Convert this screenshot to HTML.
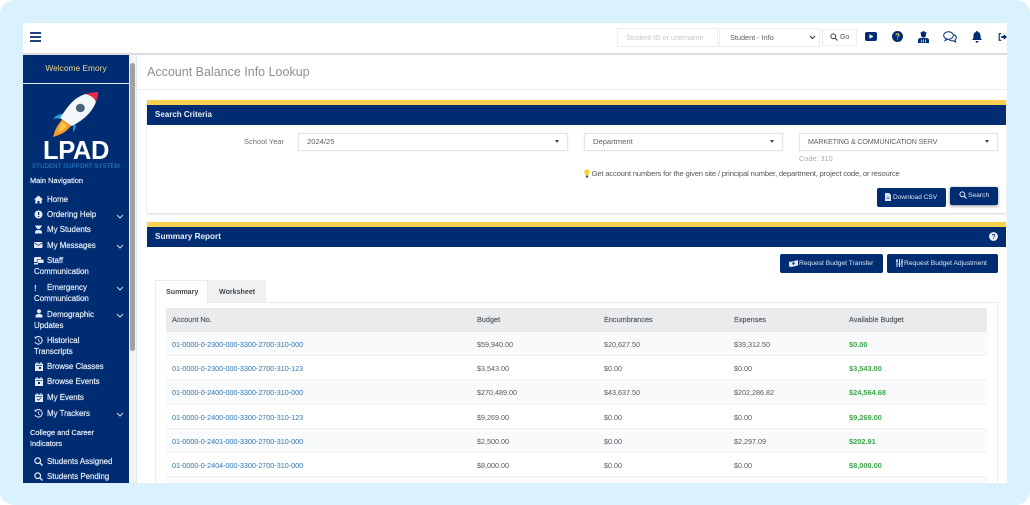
<!DOCTYPE html>
<html><head><meta charset="utf-8">
<style>
*{box-sizing:border-box}
html,body{margin:0;padding:0;width:1030px;height:505px;overflow:hidden;background:#fff}
body{font-family:"Liberation Sans",sans-serif;position:relative}
#bg{position:absolute;left:0;top:0;width:1030px;height:505px;background:#daf1fe;border-radius:14px}
#app{position:absolute;left:23px;top:23px;width:984px;height:460px;background:#fff;overflow:hidden}
.a{position:absolute;white-space:nowrap}
.t{position:absolute;white-space:nowrap;line-height:12px;height:12px}
svg{position:absolute;display:block}
.nav{color:#e3ebf7;font-size:7.9px;-webkit-text-stroke:.2px #e3ebf7}
.sel{position:absolute;background:#fff;border:1px solid #e4e6e8;box-shadow:0 0 1px #ddd;height:18px;color:#5d6166;font-size:7.6px;line-height:16px;padding-left:8px;white-space:nowrap}
.sel:after{content:"";position:absolute;right:8px;top:6px;border-left:2.5px solid transparent;border-right:2.5px solid transparent;border-top:3px solid #444}
.btn{position:absolute;background:#002d72;color:#dfe7f3;font-size:6.7px;border-radius:2px;line-height:19px;white-space:nowrap;font-weight:400}
.h{color:#5b6065;font-size:7.3px;-webkit-text-stroke:.2px #5b6065}
.c{color:#55595e;font-size:7.2px}
.l{color:#2f74b0;font-size:7.2px}
.g{color:#3fa64b;font-size:7.4px;font-weight:700}
</style></head>
<body>
<div id="bg"></div>
<div id="app">
<!-- header -->
<div class="a" style="left:0;top:0;width:984px;height:32px;background:#fff;border-bottom:2px solid #dcdcdc"></div>
<div class="a" style="left:7px;top:9px;width:11px;height:2px;background:#23427c"></div>
<div class="a" style="left:7px;top:13px;width:11px;height:2px;background:#23427c"></div>
<div class="a" style="left:7px;top:17px;width:11px;height:2px;background:#23427c"></div>

<div class="a" style="left:594px;top:5px;width:101px;height:19px;border:1px solid #eceded;color:#c3c6c9;font-size:7.3px;line-height:17px;padding-left:8px">Student ID or username</div>
<div class="a" style="left:696px;top:5px;width:101px;height:19px;border:1px solid #eceded;color:#5a5e63;font-size:7.3px;line-height:17px;padding-left:10px">Student - Info
<svg style="left:89px;top:6px" width="7" height="5" viewBox="0 0 7 5"><path d="M1 1l2.5 2.5L6 1" fill="none" stroke="#444" stroke-width="1.2"/></svg></div>
<div class="a" style="left:799px;top:6px;width:35px;height:17px;border:1px solid #eceded;color:#555;font-size:7px;line-height:16px;padding-left:17px">Go
<svg style="left:7px;top:3px" width="8" height="8" viewBox="0 0 8 8"><circle cx="3.3" cy="3.3" r="2.4" fill="none" stroke="#444" stroke-width="1"/><path d="M5 5l2.5 2.5" stroke="#444" stroke-width="1.1"/></svg></div>

<svg style="left:842px;top:9px" width="12" height="9" viewBox="0 0 12 9"><rect width="12" height="9" rx="2" fill="#002d72"/><path d="M4.5 2.2v4.6L8.5 4.5z" fill="#fff"/></svg>
<svg style="left:869px;top:8px" width="11" height="11" viewBox="0 0 11 11"><circle cx="5.5" cy="5.5" r="5.5" fill="#002d72"/><path d="M4 4.2c0-2 3-2 3 0 0 1-1.500 1-1.500 2.200" fill="none" stroke="#f4d35e" stroke-width="1"/><rect x="5" y="7.500" width="1" height="1" fill="#f4d35e"/></svg>
<svg style="left:895px;top:8px" width="11" height="12" viewBox="0 0 11 12"><path d="M5.500 0l3.500 2-1 .5V4c0 1.500-1 2.500-2.500 2.500S3 5.500 3 4V2.500L2 2z" fill="#002d72"/><path d="M0 12V9c0-1.500 1.500-2 3-2h5c1.500 0 3 .5 3 2v3z" fill="#002d72"/><path d="M3.500 8.500v3M5.500 8.500v3M7.500 8.500v3" stroke="#fff" stroke-width=".7"/></svg>
<svg style="left:920px;top:8px" width="14" height="12" viewBox="0 0 14 12"><ellipse cx="5.500" cy="4.500" rx="4.800" ry="3.700" fill="none" stroke="#002d72" stroke-width="1"/><path d="M3 8L1.800 9.800 5 8.200" fill="none" stroke="#002d72" stroke-width=".8"/><path d="M10.800 3.600c1.500.6 2.500 1.700 2.500 3 0 1-.5 1.800-1.300 2.400l.7 2-2.500-1.300c-1.500.3-3-.1-4-1" fill="none" stroke="#002d72" stroke-width="1"/></svg>
<svg style="left:949px;top:8px" width="10" height="12" viewBox="0 0 10 12"><path d="M5 0c.6 0 1 .4 1 1 1.800.5 2.500 2 2.500 3.500 0 2.500.5 3.500 1.500 4.500H0c1-1 1.500-2 1.500-4.500C1.500 3 2.200 1.500 4 1c0-.6.4-1 1-1z" fill="#002d72"/><path d="M3.500 10h3c0 1-.7 1.800-1.500 1.800S3.500 11 3.500 10z" fill="#002d72"/></svg>
<svg style="left:975px;top:9px" width="9" height="10" viewBox="0 0 11 10"><path d="M4 1H1.500v8H4" fill="none" stroke="#002d72" stroke-width="1.400"/><path d="M4 3.800h3V1.500L11 5 7 8.500V6.200H4z" fill="#002d72"/></svg>

<!-- sidebar -->
<div class="a" style="left:0;top:32px;width:106px;height:428px;background:#002d72"></div>
<div class="a" style="left:0;top:60px;width:106px;height:1px;background:#dfe6f0"></div>
<div class="t" style="left:0;top:39px;width:106px;text-align:center;color:#ecd489;font-size:8.400px">Welcome Emory</div>
<div class="a" style="left:106px;top:32px;width:7px;height:428px;background:#f3f3f3"></div>
<div class="a" style="left:107px;top:40px;width:5px;height:288px;background:#a2a2a2;border-radius:3px"></div>
<div class="a" style="left:113px;top:32px;width:1px;height:428px;background:#e6e6e6"></div>

<svg style="left:21px;top:69px" width="60" height="48" viewBox="0 0 52 48" preserveAspectRatio="none">
<path d="M8 27C10 23 17 20 22 22L17 28C14 26 11 26 8 27z" fill="#2a9fd8"/>
<path d="M27 32C30 31 32 27 30 24L24 29C25 31 26 33 25 40 27 38 28 35 27 32z" fill="#2a9fd8"/>
<path d="M17 26L14 30C12 33 9 38 8 45 13 43 18 41 21 37L24 33z" fill="#f29a2e"/>
<path d="M16 30C14 33 13 37 12 40 15 39 18 37 20 34z" fill="#f7c948"/>
<path d="M36 2C27 5 21 13 14 26L24 34C36 27 42 19 45 10 44 6 40 3 36 2z" fill="#f4f7fa"/>
<path d="M36 2C39 1 45 0 47 0 47 3 46 8 45 10 44 6 40 3 36 2z" fill="#ea2a4a"/>
<ellipse cx="31.500" cy="16" rx="3.900" ry="4.200" fill="#4d6478"/>
</svg>
<div class="t" style="left:0;top:113px;width:106px;height:30px;line-height:30px;text-align:center;color:#fff;font-size:25.500px;font-weight:700;letter-spacing:-.4px">LPAD</div>
<div class="t" style="left:0;top:138px;width:106px;text-align:center;color:#2a8ad2;font-size:6px;letter-spacing:.12px">STUDENT SUPPORT SYSTEM</div>
<div class="t nav" style="left:7px;top:152px;font-size:7.400px">Main Navigation</div>

<div class="t nav" style="left:24px;top:171px">Home</div>
<div class="t nav" style="left:24px;top:186px">Ordering Help</div>
<div class="t nav" style="left:24px;top:201px">My Students</div>
<div class="t nav" style="left:24px;top:217px">My Messages</div>
<div class="t nav" style="left:24px;top:232px">Staff</div>
<div class="t nav" style="left:11px;top:243px">Communication</div>
<div class="t nav" style="left:24px;top:258.500px">Emergency</div>
<div class="t nav" style="left:11px;top:269.500px">Communication</div>
<div class="t nav" style="left:24px;top:285.500px">Demographic</div>
<div class="t nav" style="left:11px;top:296.500px">Updates</div>
<div class="t nav" style="left:24px;top:312px">Historical</div>
<div class="t nav" style="left:11px;top:322.500px">Transcripts</div>
<div class="t nav" style="left:24px;top:338px">Browse Classes</div>
<div class="t nav" style="left:24px;top:353px">Browse Events</div>
<div class="t nav" style="left:24px;top:368.500px">My Events</div>
<div class="t nav" style="left:24px;top:384.500px">My Trackers</div>
<div class="t nav" style="left:7px;top:404px;font-size:7.400px">College and Career</div>
<div class="t nav" style="left:7px;top:414.500px;font-size:7.400px">Indicators</div>
<div class="t nav" style="left:24px;top:433px">Students Assigned</div>
<div class="t nav" style="left:24px;top:448px">Students Pending</div>

<!-- sidebar icons -->
<svg style="left:11px;top:172px" width="9" height="9" viewBox="0 0 9 9"><path d="M4.500.5L0 4.500h1.300V8.500h2.200V6h2v2.500h2.200V4.500H9z" fill="#e3ebf7"/></svg>
<svg style="left:11px;top:187px" width="9" height="9" viewBox="0 0 9 9"><circle cx="4.500" cy="4.500" r="4" fill="#e3ebf7"/><rect x="4" y="2" width="1.200" height="3" fill="#002d72"/><rect x="4" y="6" width="1.200" height="1" fill="#002d72"/></svg>
<svg style="left:11px;top:202px" width="9" height="9" viewBox="0 0 9 9"><path d="M1 .5h7v1H7c0 1.500-1 2-1.500 2.500h-2C3 3.500 2 3 2 1.500H1zM1 8.500V7c0-1 1-1.800 2.500-2h2C7 5.200 8 6 8 7v1.500z" fill="#e3ebf7"/></svg>
<svg style="left:11px;top:218px" width="9" height="8" viewBox="0 0 9 8"><rect y="1" width="8.500" height="6" rx=".7" fill="#e3ebf7"/><path d="M.3 1.800l4 2.700 4-2.700" fill="none" stroke="#002d72" stroke-width=".7"/></svg>
<svg style="left:11px;top:233px" width="10" height="9" viewBox="0 0 10 9"><path d="M1 1h6v2H3v3H0V2z" fill="#e3ebf7"/><rect x="3.500" y="3.500" width="6" height="3.500" fill="#e3ebf7"/><rect x="0" y="7" width="4" height="1.500" fill="#e3ebf7"/></svg>
<div class="t" style="left:11px;top:258.500px;color:#e3ebf7;font-size:8.500px;font-weight:700">!</div>
<svg style="left:12px;top:286px" width="8" height="9" viewBox="0 0 8 9"><circle cx="4" cy="2.300" r="2.100" fill="#e3ebf7"/><path d="M.5 8.500V7.200C.5 5.700 2 5 4 5s3.500.7 3.500 2.200v1.300z" fill="#e3ebf7"/></svg>
<svg style="left:11px;top:313px" width="9" height="9" viewBox="0 0 9 9"><path d="M1.200 2.200A3.800 3.800 0 1 1 1 6" fill="none" stroke="#e3ebf7" stroke-width="1"/><path d="M0 .7l2.600.4-.6 2.300z" fill="#e3ebf7"/><path d="M4.500 2.500v2.200l1.500 1" fill="none" stroke="#e3ebf7" stroke-width=".8"/></svg>
<svg style="left:12px;top:339px" width="8" height="9" viewBox="0 0 8 9"><path d="M0 1.500h8V9H0z" fill="#e3ebf7"/><path d="M2 0v2M6 0v2" stroke="#e3ebf7" stroke-width="1"/><rect x="1" y="3" width="6" height=".7" fill="#002d72"/><rect x="4" y="5" width="2" height="2" fill="#002d72"/></svg>
<svg style="left:12px;top:354px" width="8" height="9" viewBox="0 0 8 9"><path d="M0 1.500h8V9H0z" fill="#e3ebf7"/><path d="M2 0v2M6 0v2" stroke="#e3ebf7" stroke-width="1"/><rect x="1" y="3" width="6" height=".7" fill="#002d72"/><rect x="3" y="5" width="2" height="2" fill="#002d72"/></svg>
<svg style="left:12px;top:369.500px" width="8" height="9" viewBox="0 0 8 9"><path d="M0 1.500h8V9H0z" fill="#e3ebf7"/><path d="M2 0v2M6 0v2" stroke="#e3ebf7" stroke-width="1"/><rect x="1" y="3" width="6" height=".7" fill="#002d72"/><path d="M2 6l1.300 1.200L6 4.800" fill="none" stroke="#002d72" stroke-width=".8"/></svg>
<svg style="left:11px;top:385.500px" width="9" height="9" viewBox="0 0 9 9"><path d="M1.200 2.200A3.800 3.800 0 1 1 1 6" fill="none" stroke="#e3ebf7" stroke-width="1"/><path d="M0 .7l2.600.4-.6 2.300z" fill="#e3ebf7"/><path d="M4.500 2.500v2.200l1.500 1" fill="none" stroke="#e3ebf7" stroke-width=".8"/></svg>
<svg style="left:11px;top:434px" width="9" height="9" viewBox="0 0 9 9"><circle cx="3.700" cy="3.700" r="2.800" fill="none" stroke="#e3ebf7" stroke-width="1.200"/><path d="M5.800 5.800l2.700 2.700" stroke="#e3ebf7" stroke-width="1.400"/></svg>
<svg style="left:11px;top:449px" width="9" height="9" viewBox="0 0 9 9"><circle cx="3.700" cy="3.700" r="2.800" fill="none" stroke="#e3ebf7" stroke-width="1.200"/><path d="M5.800 5.800l2.700 2.700" stroke="#e3ebf7" stroke-width="1.400"/></svg>
<!-- chevrons -->
<svg style="left:93px;top:190.500px" width="8" height="6" viewBox="0 0 8 6"><path d="M1 1l3 3 3-3" fill="none" stroke="#cfdaec" stroke-width="1"/></svg>
<svg style="left:93px;top:221px" width="8" height="6" viewBox="0 0 8 6"><path d="M1 1l3 3 3-3" fill="none" stroke="#cfdaec" stroke-width="1"/></svg>
<svg style="left:93px;top:262.500px" width="8" height="6" viewBox="0 0 8 6"><path d="M1 1l3 3 3-3" fill="none" stroke="#cfdaec" stroke-width="1"/></svg>
<svg style="left:93px;top:289.500px" width="8" height="6" viewBox="0 0 8 6"><path d="M1 1l3 3 3-3" fill="none" stroke="#cfdaec" stroke-width="1"/></svg>
<svg style="left:93px;top:388.500px" width="8" height="6" viewBox="0 0 8 6"><path d="M1 1l3 3 3-3" fill="none" stroke="#cfdaec" stroke-width="1"/></svg>

<!-- title -->
<div class="t" style="left:124px;top:41px;height:16px;line-height:16px;color:#8d9094;font-size:12.500px">Account Balance Info Lookup</div>
<div class="a" style="left:114px;top:66px;width:870px;height:1px;background:#ececec"></div>

<!-- search card -->
<div class="a" style="left:124px;top:77px;width:859px;height:113px;background:#fff;box-shadow:0 1px 2px #d4d4d4"></div>
<div class="a" style="left:124px;top:77px;width:859px;height:5px;background:#f9d14f"></div>
<div class="a" style="left:124px;top:82px;width:859px;height:20px;background:#002d72"></div>
<div class="t" style="left:132px;top:86px;color:#e8eef7;font-size:8px;font-weight:700">Search Criteria</div>
<div class="t" style="left:221px;top:113px;color:#6a6e73;font-size:7.500px">School Year</div>
<div class="sel" style="left:275px;top:110px;width:270px">2024/25</div>
<div class="sel" style="left:561px;top:110px;width:199px">Department</div>
<div class="sel" style="left:776px;top:110px;width:199px;font-size:7.100px;letter-spacing:-.12px">MARKETING &amp; COMMUNICATION SERV</div>
<div class="t" style="left:776px;top:130px;color:#a9adb1;font-size:7.300px">Code: 310</div>
<svg style="left:561px;top:146px" width="6" height="9" viewBox="0 0 6 9"><path d="M3 .5C1.300.5.300 1.700.300 3c0 1.300 1 1.800 1.200 3h3c.2-1.200 1.200-1.700 1.200-3C5.700 1.700 4.700.5 3 .5z" fill="#f7d52c"/><rect x="1.800" y="6.500" width="2.400" height="2" fill="#444"/></svg>
<div class="t" style="left:568.500px;top:145px;color:#55595e;font-size:7.700px;letter-spacing:-.2px">Get account numbers for the given site / principal number, department, project code, or resource</div>
<div class="btn" style="left:854px;top:165px;width:69px;padding-left:16px;font-size:6.500px">Download CSV
<svg style="left:8px;top:5px" width="6" height="8" viewBox="0 0 6 8"><path d="M0 0h4l2 2v6H0z" fill="#dfe7f3"/><path d="M1.500 4h3M1.500 5.500h3" stroke="#002d72" stroke-width=".6"/></svg></div>
<div class="btn" style="left:927px;top:164px;width:48px;height:18px;padding-left:18px;line-height:18px;box-shadow:0 1px 3px #888">Search
<svg style="left:9px;top:4px" width="8" height="8" viewBox="0 0 8 8"><circle cx="3.300" cy="3.300" r="2.400" fill="none" stroke="#dfe7f3" stroke-width="1"/><path d="M5 5l2.500 2.500" stroke="#dfe7f3" stroke-width="1.200"/></svg></div>

<!-- summary -->
<div class="a" style="left:124px;top:199px;width:859px;height:5px;background:#f9d14f"></div>
<div class="a" style="left:124px;top:204px;width:859px;height:20px;background:#002d72"></div>
<div class="t" style="left:132px;top:208px;color:#e8eef7;font-size:8.200px;font-weight:700">Summary Report</div>
<svg style="left:966px;top:209px" width="9" height="9" viewBox="0 0 9 9"><circle cx="4.500" cy="4.500" r="4.400" fill="#f0f3f7"/><path d="M3.200 3.500c0-1.600 2.700-1.600 2.700 0 0 .9-1.300.9-1.300 1.900" fill="none" stroke="#002d72" stroke-width=".8"/><rect x="4.200" y="6" width=".9" height=".9" fill="#002d72"/></svg>
<div class="btn" style="left:757px;top:231px;width:103px;padding-left:19px">Request Budget Transfer
<svg style="left:9px;top:6px" width="9" height="7" viewBox="0 0 9 7"><path d="M0 1.500C3 2.500 6 .5 9 0v5.500C6 6 3 7.500 0 6.500z" fill="#dfe7f3"/><circle cx="4.500" cy="3.500" r="1.200" fill="#002d72"/></svg></div>
<div class="btn" style="left:864px;top:231px;width:111px;padding-left:17px">Request Budget Adjustment
<svg style="left:9px;top:5px" width="7" height="8" viewBox="0 0 7 8"><path d="M1 0v8M3.500 0v8M6 0v8" stroke="#dfe7f3" stroke-width="1"/><path d="M0 2h2M2.500 5h2M5 3h2" stroke="#dfe7f3" stroke-width="1.300"/></svg></div>

<!-- tabs -->
<div class="a" style="left:132px;top:279px;width:843px;height:190px;border:1px solid #e9ebec"></div>
<div class="a" style="left:132px;top:257px;width:53px;height:23px;background:#fff;border:1px solid #e9ebec;border-bottom:none"></div>
<div class="a" style="left:185px;top:257px;width:58px;height:22px;background:#eff1f2"></div>
<div class="t" style="left:143px;top:263px;color:#44484c;font-size:7.100px;font-weight:700">Summary</div>
<div class="t" style="left:196px;top:263px;color:#44484c;font-size:7.100px;font-weight:700">Worksheet</div>

<!-- table -->
<div class="a" style="left:143px;top:285px;width:821px;height:24px;background:#e9ebed"></div>
<div class="t h" style="left:149px;top:291px">Account No.</div>
<div class="t h" style="left:454px;top:291px">Budget</div>
<div class="t h" style="left:581px;top:291px">Encumbrances</div>
<div class="t h" style="left:711px;top:291px">Expenses</div>
<div class="t h" style="left:826px;top:291px">Available Budget</div>

<div class="a" style="left:143px;top:309px;width:821px;height:24px;background:#f9fafb;border-bottom:1px solid #f0f1f2"></div>
<div class="a" style="left:143px;top:333px;width:821px;height:24px;background:#fff;border-bottom:1px solid #f0f1f2"></div>
<div class="a" style="left:143px;top:357px;width:821px;height:25px;background:#f9fafb;border-bottom:1px solid #f0f1f2"></div>
<div class="a" style="left:143px;top:382px;width:821px;height:24px;background:#fff;border-bottom:1px solid #f0f1f2"></div>
<div class="a" style="left:143px;top:406px;width:821px;height:24px;background:#f9fafb;border-bottom:1px solid #f0f1f2"></div>
<div class="a" style="left:143px;top:430px;width:821px;height:24px;background:#fff;border-bottom:1px solid #f0f1f2"></div>
<div class="a" style="left:143px;top:454px;width:821px;height:6px;background:#f9fafb"></div>

<div class="t l" style="left:149px;top:315.500px">01-0000-0-2300-000-3300-2700-310-000</div>
<div class="t c" style="left:454px;top:315.500px">$59,940.00</div>
<div class="t c" style="left:581px;top:315.500px">$20,627.50</div>
<div class="t c" style="left:711px;top:315.500px">$39,312.50</div>
<div class="t g" style="left:826px;top:315.500px">$0.00</div>

<div class="t l" style="left:149px;top:340px">01-0000-0-2300-000-3300-2700-310-123</div>
<div class="t c" style="left:454px;top:340px">$3,543.00</div>
<div class="t c" style="left:581px;top:340px">$0.00</div>
<div class="t c" style="left:711px;top:340px">$0.00</div>
<div class="t g" style="left:826px;top:340px">$3,543.00</div>

<div class="t l" style="left:149px;top:364px">01-0000-0-2400-000-3300-2700-310-000</div>
<div class="t c" style="left:454px;top:364px">$270,489.00</div>
<div class="t c" style="left:581px;top:364px">$43,637.50</div>
<div class="t c" style="left:711px;top:364px">$202,286.82</div>
<div class="t g" style="left:826px;top:364px">$24,564.68</div>

<div class="t l" style="left:149px;top:388.500px">01-0000-0-2400-000-3300-2700-310-123</div>
<div class="t c" style="left:454px;top:388.500px">$9,269.00</div>
<div class="t c" style="left:581px;top:388.500px">$0.00</div>
<div class="t c" style="left:711px;top:388.500px">$0.00</div>
<div class="t g" style="left:826px;top:388.500px">$9,269.00</div>

<div class="t l" style="left:149px;top:412.500px">01-0000-0-2401-000-3300-2700-310-000</div>
<div class="t c" style="left:454px;top:412.500px">$2,500.00</div>
<div class="t c" style="left:581px;top:412.500px">$0.00</div>
<div class="t c" style="left:711px;top:412.500px">$2,297.09</div>
<div class="t g" style="left:826px;top:412.500px">$202.91</div>

<div class="t l" style="left:149px;top:437px">01-0000-0-2404-000-3300-2700-310-000</div>
<div class="t c" style="left:454px;top:437px">$8,000.00</div>
<div class="t c" style="left:581px;top:437px">$0.00</div>
<div class="t c" style="left:711px;top:437px">$0.00</div>
<div class="t g" style="left:826px;top:437px">$8,000.00</div>
</div>
</body></html>
